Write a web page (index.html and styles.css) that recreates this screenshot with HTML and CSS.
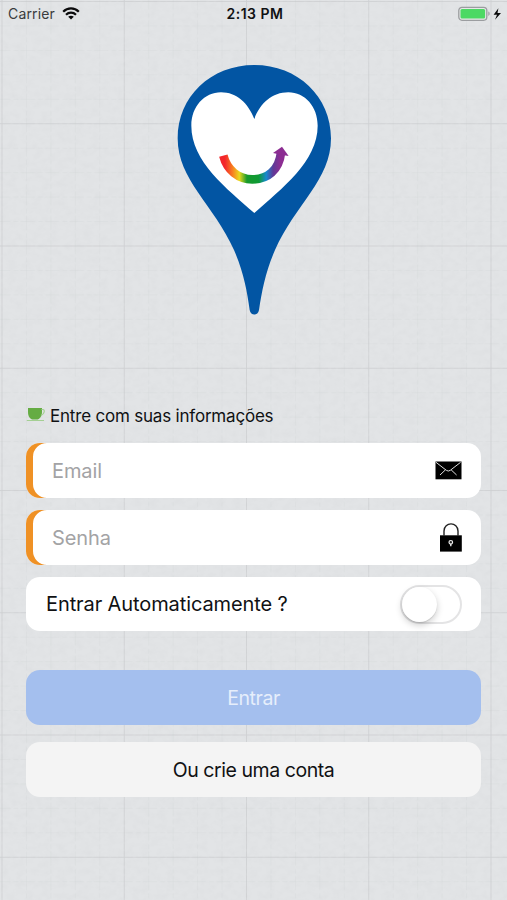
FILE: index.html
```
<!DOCTYPE html>
<html lang="pt-BR">
<head>
    <meta charset="UTF-8">
    <meta name="viewport" content="width=device-width, initial-scale=1">
    <title>Entrar</title>
    <link rel="stylesheet" href="styles.css">
</head>
<body>
    <div class="screen">
        <svg class="paper" width="507" height="900">
            <defs>
                <filter id="grain" x="0" y="0" width="100%" height="100%">
                    <feTurbulence type="fractalNoise" baseFrequency="0.12 0.16" numOctaves="3" seed="4"/>
                    <feColorMatrix values="0 0 0 0 0.45  0 0 0 0 0.46  0 0 0 0 0.48  0.14 0 0 0 -0.05"/>
                </filter>
                <pattern id="small" x="1.5" y="1" width="24.45" height="24.45" patternUnits="userSpaceOnUse">
                    <path d="M0 .5H24.45M.5 0V24.45" stroke="#c8cacc" stroke-opacity=".22" stroke-width=".8" stroke-dasharray="9 3 5 2"/>
                </pattern>
                <pattern id="large" x="1.5" y="1" width="122.25" height="122.25" patternUnits="userSpaceOnUse">
                    <path d="M0 .5H122.25M.5 0V122.25" stroke="#bcbec0" stroke-opacity=".36"/>
                </pattern>
            </defs>
            <rect width="507" height="900" filter="url(#grain)"/>
            <rect width="507" height="900" fill="url(#small)"/>
            <rect width="507" height="900" fill="url(#large)"/>
        </svg>

        <header class="status-bar">
            <div class="carrier">
                <span>Carrier</span>
                <svg width="18" height="13" viewBox="0 0 18 13" fill="none" stroke="#0b0b0c" stroke-width="2.2">
                    <path d="M1.2 4.7C5.5 .3 12.5 .3 16.8 4.7"/>
                    <path d="M4 7.7C6.8 4.9 11.2 4.9 14 7.7"/>
                    <path d="M9 12.6L6.2 9.8C7.7 8.3 10.3 8.3 11.8 9.8Z" fill="#0b0b0c" stroke="none"/>
                </svg>
            </div>
            <span class="time">2:13 PM</span>
            <svg class="battery" width="44" height="16" viewBox="0 0 44 16">
                <rect x=".8" y="1.3" width="28" height="13" rx="3.2" fill="#e6e8e7" stroke="#9b9da0" stroke-width="1.3"/>
                <rect x="2.5" y="3" width="24.6" height="9.6" rx="1.5" fill="#4cd964"/>
                <path d="M30.3 5.6C32.1 6 32.1 9.6 30.3 10Z" fill="#9b9da0"/>
                <path d="M40.4 2.2L35.6 8.7H39L37 13.7L43 6.9H39.5Z" fill="#0b0b0c"/>
            </svg>
        </header>

        <main class="login">
            <svg class="logo" width="180" height="270" viewBox="0 0 540 810">
                <defs>
                    <linearGradient id="rainbow" gradientUnits="userSpaceOnUse" x1="163" y1="0" x2="370" y2="0">
                        <stop offset=".08" stop-color="#f3262b"/>
                        <stop offset=".2" stop-color="#f7861f"/>
                        <stop offset=".29" stop-color="#e9d91c"/>
                        <stop offset=".4" stop-color="#169a2c"/>
                        <stop offset=".57" stop-color="#0f9a35"/>
                        <stop offset=".68" stop-color="#1789cf"/>
                        <stop offset=".78" stop-color="#5e3a97"/>
                        <stop offset=".88" stop-color="#8c2d92"/>
                    </linearGradient>
                </defs>
                <path fill="#0255a3" d="M268 30C398 30 498 125 498 250C498 375 390 450 330 585C302 650 291 705 282 765C279 783 257 783 254 765C246 705 235 650 207 585C147 450 38 375 38 250C38 125 138 30 268 30Z"/>
                <path fill="#fff" d="M268 192C250 145 215 112 168 112C118 112 79 155 79 212C79 320 185 400 268 474C350 400 458 320 458 212C458 155 420 112 370 112C322 112 285 145 268 192Z"/>
                <path fill="none" stroke="url(#rainbow)" stroke-width="26" d="M175 302C186 345 220 373 262 373C308 373 342 345 348 293"/>
                <path fill="#8c2d92" d="M351 275L371 303L348 299L324 294Z"/>
            </svg>

            <h1 class="title">
                <svg width="20" height="16" viewBox="0 0 20 16">
                    <path d="M2 0H16V4C16 8.500 13.500 10.800 11.500 11.500H6.500C4 10.800 2 8.500 2 4Z" fill="#65ac43"/>
                    <path d="M15.500 1.500H17C19 1.500 18.800 6 15 7.500M.8 12.500H18" fill="none" stroke="#a4cf93" stroke-width="1.200"/>
                </svg>
                Entre com suas informações
            </h1>

            <form class="login-form">
                <div class="field">
                    <input type="email" placeholder="Email" aria-label="Email">
                    <svg width="27" height="19" viewBox="0 0 27 19">
                        <rect x=".5" y=".5" width="26" height="17.800" fill="#000"/>
                        <path d="M1 1.300L11.300 9.300Q13.300 10.800 15.300 9.300L25.600 1.300M5 14L10.500 8.800M21.600 14L16.100 8.800" fill="none" stroke="#ddd" stroke-width="1"/>
                    </svg>
                </div>
                <div class="field">
                    <input type="password" placeholder="Senha" aria-label="Senha">
                    <svg width="23" height="30" viewBox="0 0 23 30">
                        <path d="M5 12.500V8C5 -1.500 19 -1.500 19 8V12.500" fill="none" stroke="#222" stroke-width="1.400"/>
                        <rect x="1" y="12.300" width="21.800" height="16.300" fill="#000"/>
                        <circle cx="11.800" cy="19.300" r="1.800" fill="#222" stroke="#eee" stroke-width="1.200"/>
                        <path d="M11.800 20.800V23.300" stroke="#eee" stroke-width="1.400"/>
                    </svg>
                </div>
                <div class="auto-login">
                    <span>Entrar Automaticamente ?</span>
                    <span class="switch"></span>
                </div>
                <button type="button" class="button primary">Entrar</button>
                <button type="button" class="button">Ou crie uma conta</button>
            </form>
        </main>
    </div>
</body>
</html>
```
FILE: styles.css
```
* {
    box-sizing: border-box;
}
body {
    margin: 0;
    font-family: Inter, "Liberation Sans", sans-serif;
    color: #101113;
}
.screen {
    position: relative;
    width: 507px;
    height: 900px;
    overflow: hidden;
    background: #e2e4e6;
}
.paper {
    position: absolute;
    top: 0;
    left: 0;
}
.status-bar {
    position: relative;
    display: grid;
    grid-template-columns: 1fr auto 1fr;
    align-items: center;
    height: 27px;
    padding: 0 5px 0 8px;
    font-size: 14px;
}
.carrier {
    display: flex;
    align-items: center;
    gap: 7px;
    color: #3a3b3d;
    letter-spacing: 0.15px;
}
.time {
    font-weight: 600;
    letter-spacing: 0.5px;
}
.battery {
    justify-self: end;
}
.login {
    position: relative;
    padding: 28px 26px 0;
}
.logo {
    display: block;
    margin-left: 139px;
}
.title {
    display: flex;
    align-items: center;
    gap: 4px;
    height: 24px;
    margin: 79px 0 15px;
    font-size: 17px;
    font-weight: 400;
    letter-spacing: -0.2px;
    white-space: nowrap;
}
.login-form {
    display: flex;
    flex-direction: column;
    gap: 12px;
}
.field {
    display: flex;
    align-items: center;
    height: 55px;
    padding: 0 19px 0 26px;
    background: #fff;
    border-radius: 14px;
    box-shadow: inset 7px 0 0 #ef9125;
}
.field input {
    flex: 1;
    min-width: 0;
    padding: 0;
    border: none;
    outline: none;
    background: none;
    font: inherit;
    font-size: 20px;
    letter-spacing: -0.1px;
}
.field input::placeholder {
    color: #a3a3a5;
}
.auto-login {
    display: flex;
    align-items: center;
    justify-content: space-between;
    height: 54px;
    padding: 0 19px 0 20px;
    background: #fff;
    border-radius: 14px;
    font-size: 20px;
    letter-spacing: -0.1px;
}
.switch {
    width: 62px;
    height: 39px;
    border: 2px solid #e4e4e5;
    border-radius: 20px;
}
.switch::before {
    content: "";
    display: block;
    width: 35px;
    height: 35px;
    border-radius: 50%;
    background: #fff;
    box-shadow: 0 3px 7px rgba(0, 0, 0, 0.2), 0 1px 1px rgba(0, 0, 0, 0.1);
}
.button {
    height: 55px;
    margin-top: 5px;
    border: none;
    border-radius: 14px;
    background: #f4f4f4;
    color: #101113;
    font-family: inherit;
    font-size: 19.5px;
    letter-spacing: -0.45px;
}
.button.primary {
    margin-top: 27px;
    background: #a4bfee;
    color: #e6eefb;
}
```
